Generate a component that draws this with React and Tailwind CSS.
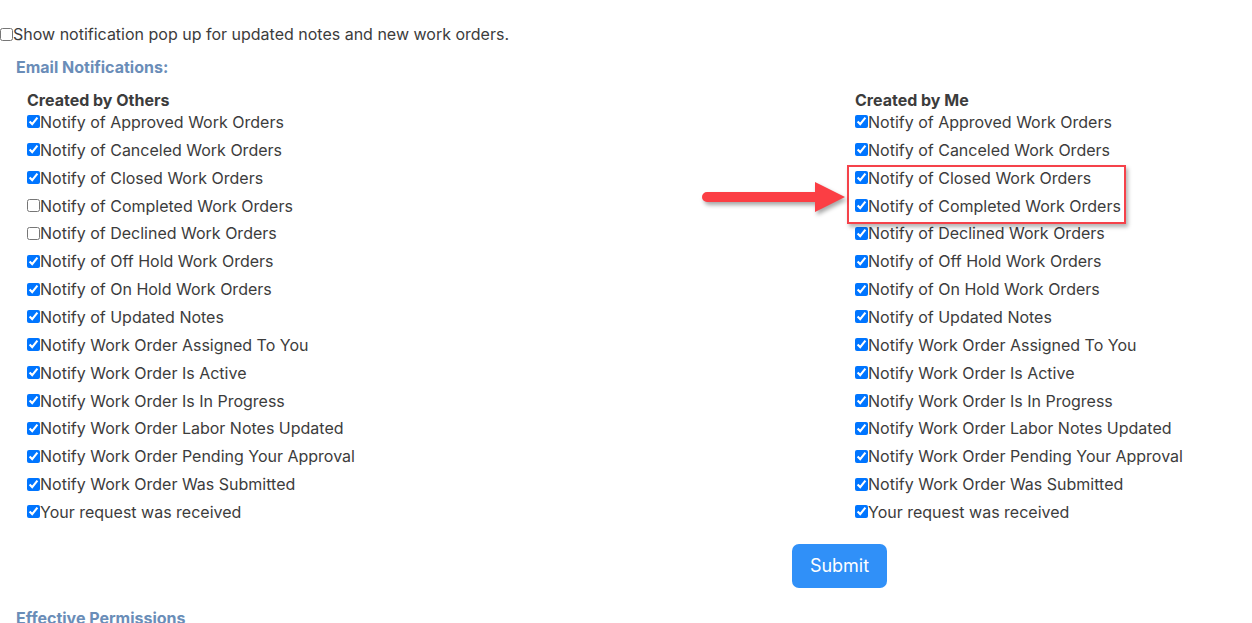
import React from "react";

const items = [
  "Notify of Approved Work Orders",
  "Notify of Canceled Work Orders",
  "Notify of Closed Work Orders",
  "Notify of Completed Work Orders",
  "Notify of Declined Work Orders",
  "Notify of Off Hold Work Orders",
  "Notify of On Hold Work Orders",
  "Notify of Updated Notes",
  "Notify Work Order Assigned To You",
  "Notify Work Order Is Active",
  "Notify Work Order Is In Progress",
  "Notify Work Order Labor Notes Updated",
  "Notify Work Order Pending Your Approval",
  "Notify Work Order Was Submitted",
  "Your request was received",
];

const leftChecked = items.map((_, i) => !(i === 3 || i === 4));
const rightChecked = items.map(() => true);

function Row({ label, checked }) {
  return (
    <label className="flex items-center h-[27.86px]">
      <input type="checkbox" defaultChecked={checked} className="m-0 w-[13px] h-[13px] accent-[#0075ff]" />
      <span>{label}</span>
    </label>
  );
}

function Column({ title, checks, highlight }) {
  return (
    <div className="flex flex-col">
      <div className="font-bold h-[17px] flex items-center">{title}</div>
      <div className="flex flex-col">
        {items.slice(0, 2).map((t, i) => (
          <Row key={t} label={t} checked={checks[i]} />
        ))}
        {highlight ? (
          <div className="relative">
            <div className="absolute left-[-8px] top-[1px] w-[279px] h-[59px] border-2 border-[#f5424a] shadow-[2px_3px_4px_rgba(0,0,0,0.3)] pointer-events-none" />
            <svg className="absolute left-[-156px] top-[14px]" width="150" height="40" viewBox="0 0 150 40" style={{ filter: "drop-shadow(2px 3px 2px rgba(0,0,0,0.35))" }}>
              <path d="M8 14 H116 V4 L146 19 L116 34 V24 H8 A5 5 0 0 1 8 14 Z" fill="#fb3e44" />
            </svg>
            {items.slice(2, 4).map((t, i) => (
              <Row key={t} label={t} checked={checks[i + 2]} />
            ))}
          </div>
        ) : (
          items.slice(2, 4).map((t, i) => <Row key={t} label={t} checked={checks[i + 2]} />)
        )}
        {items.slice(4).map((t, i) => (
          <Row key={t} label={t} checked={checks[i + 4]} />
        ))}
      </div>
    </div>
  );
}

export default function App() {
  return (
    <div className="w-[1252px] h-[623px] overflow-hidden bg-white text-[#3c3c3c] text-[16px]" style={{ fontFamily: "Inter, 'Noto Sans', sans-serif" }}>
      <div className="pt-[25px]">
        <label className="flex items-center h-[18px]">
          <input type="checkbox" className="m-0 w-[13px] h-[13px]" />
          <span>Show notification pop up for updated notes and new work orders.</span>
        </label>
        <div className="pl-[16px] mt-[15px] font-bold text-[#6a8db8] h-[18px] flex items-center">Email Notifications:</div>
        <div className="flex mt-[15px] pl-[27px]">
          <div className="w-[828px]">
            <Column title="Created by Others" checks={leftChecked} />
          </div>
          <div>
            <Column title="Created by Me" checks={rightChecked} highlight />
          </div>
        </div>
        <div className="flex pl-[792px] mt-[18px]">
          <button className="w-[95px] h-[44px] rounded-[7px] bg-[#3090f8] text-white text-[18px]">Submit</button>
        </div>
        <div className="pl-[16px] mt-[18px] font-bold text-[#6a8db8]">Effective Permissions</div>
      </div>
    </div>
  );
}
